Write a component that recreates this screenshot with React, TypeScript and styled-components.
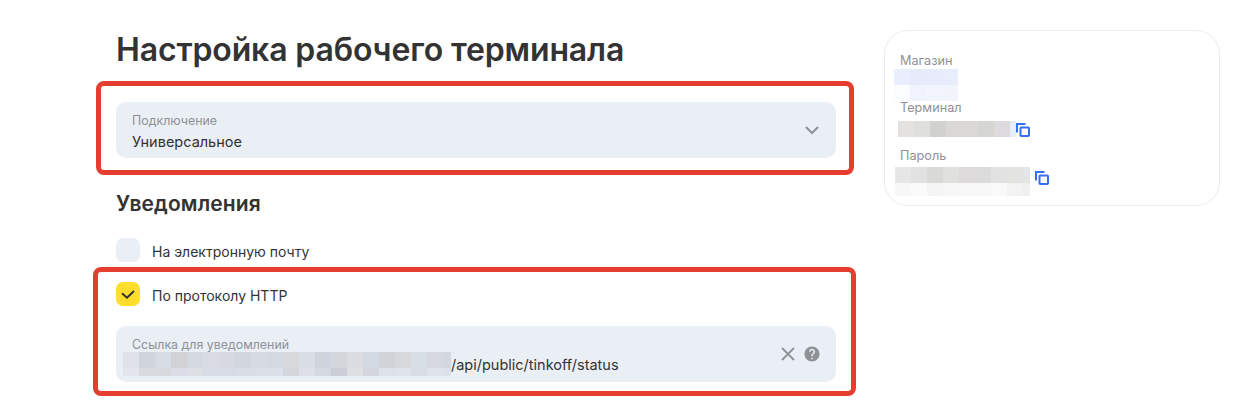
import React from "react";
import styled, { createGlobalStyle } from "styled-components";
import { MdHelp } from "react-icons/md";

const GlobalStyle = createGlobalStyle`
  html, body {
    margin: 0;
    padding: 0;
    background: #fff;
    font-family: "Inter", "Liberation Sans", sans-serif;
    color: #333;
  }
`;

const Page = styled.div`
  width: 1250px;
  height: 401px;
  overflow: hidden;
  display: flex;
  align-items: flex-start;
  padding-left: 116px;
  box-sizing: border-box;
`;

const Main = styled.div`
  width: 720px;
  display: flex;
  flex-direction: column;
`;

const Title = styled.h1`
  margin: 30px 0 0;
  height: 40px;
  font-size: 32px;
  line-height: 40px;
  font-weight: 600;
  letter-spacing: -0.14px;
  color: #333;
  white-space: nowrap;
`;

const Highlight = styled.div<{ $left: number; $right: number; $top: number; $bottom: number; $mt: number }>`
  margin-top: ${(p) => p.$mt}px;
  margin-left: ${(p) => -p.$left - 5}px;
  margin-right: ${(p) => -p.$right - 5}px;
  padding: ${(p) => `${p.$top}px ${p.$right}px ${p.$bottom}px ${p.$left}px`};
  border: 5px solid #e53d30;
  border-radius: 8px;
`;

const Field = styled.div`
  height: 56px;
  box-sizing: border-box;
  background: #eaeff6;
  border-radius: 10px;
  padding: 0 16px;
  display: flex;
  align-items: center;
  justify-content: space-between;
`;

const FieldBody = styled.div`
  display: flex;
  flex-direction: column;
  min-width: 0;
`;

const FieldLabel = styled.div`
  font-size: 12.4px;
  line-height: 16px;
  color: #8e9196;
`;

const FieldValue = styled.div`
  font-size: 14.5px;
  line-height: 20px;
  margin-top: 3px;
  margin-bottom: -4px;
  color: #333;
`;

const UrlLabel = styled(FieldLabel)`
  margin-top: 4px;
  line-height: 18px;
  margin-bottom: -2px;
`;

const UrlValue = styled.div`
  display: flex;
  align-items: flex-start;
  margin-left: -9px;
  height: 24px;
  font-size: 14.5px;
  line-height: 24px;
  color: #333;
`;

const UrlText = styled.span`
  margin-top: 1px;
`;

const FieldActions = styled.div`
  display: flex;
  align-items: center;
  gap: 7px;
  margin-right: -1px;
  color: #8e9196;
`;

const SectionTitle = styled.h2`
  margin: 17px 0 0;
  height: 24px;
  font-size: 21px;
  line-height: 24px;
  font-weight: 600;
  letter-spacing: 0.1px;
  color: #333;
`;

const CheckRow = styled.div<{ $mt: number }>`
  display: flex;
  align-items: center;
  gap: 12px;
  margin-top: ${(p) => p.$mt}px;
`;

const CheckBox = styled.div<{ $checked?: boolean }>`
  width: 24px;
  height: 24px;
  border-radius: 7px;
  background: ${(p) => (p.$checked ? "#ffdd2d" : "#eaeff6")};
  display: flex;
  align-items: center;
  justify-content: center;
`;

const CheckText = styled.span`
  font-size: 14px;
  line-height: 24px;
  padding-top: 2px;
  margin-bottom: -2px;
  color: #333;
`;

const FieldGap = styled.div`
  height: 20px;
`;

const Side = styled.aside`
  margin: 30px 0 0 48px;
  width: 336px;
  height: 176px;
  box-sizing: border-box;
  border: 1px solid #ececec;
  border-radius: 24px;
  padding: 22px 0 0 9px;
  display: flex;
  flex-direction: column;
`;

const SideLabel = styled.div<{ $after: number; $before?: number }>`
  padding-left: 6px;
  font-size: 12.7px;
  line-height: 16px;
  color: #8e9196;
  margin-top: ${(p) => p.$before ?? 0}px;
  margin-bottom: ${(p) => p.$after}px;
`;

const SideRow = styled.div<{ $indent: number; $gap: number }>`
  display: flex;
  align-items: flex-start;
  margin-left: ${(p) => p.$indent}px;
  gap: ${(p) => p.$gap}px;
`;

const CopyButton = styled.span<{ $mt: number }>`
  display: flex;
  color: #336fee;
  margin-top: ${(p) => p.$mt}px;
`;

const Blur = styled.div`
  display: flex;
  flex-direction: column;
  flex: none;
`;

const BlurRow = styled.div<{ $h: number }>`
  display: flex;
  height: ${(p) => p.$h}px;
`;

const BlurCell = styled.div<{ $w: number; $c: string }>`
  width: ${(p) => p.$w}px;
  background: ${(p) => p.$c};
`;

type MosaicRow = { h: number; cells: string[] };

const Mosaic = ({ rows, last = 16 }: { rows: MosaicRow[]; last?: number }) => (
  <Blur>
    {rows.map((row, r) => (
      <BlurRow key={r} $h={row.h}>
        {row.cells.map((c, i) => (
          <BlurCell key={i} $c={c} $w={i === row.cells.length - 1 ? last : 16} />
        ))}
      </BlurRow>
    ))}
  </Blur>
);

const shopRows: MosaicRow[] = [
  { h: 16, cells: ["#e9edfc", "#e6eafa", "#e7ebfb", "#e8ecfb"] },
  { h: 16, cells: ["#fbfcfe", "#f0f3fd", "#f3f5fd", "#f1f4fd"] },
];

const terminalRows: MosaicRow[] = [
  { h: 16, cells: ["#e3e2e1", "#dfdfde", "#d1d1ce", "#d9d8d7", "#d9d8d7", "#d5d5d2", "#dcdadc", "#e8edfa"] },
];

const passwordRows: MosaicRow[] = [
  { h: 16, cells: ["#e6e6e6", "#e1e1e1", "#d9d9d8", "#e0e0df", "#dcdadb", "#dcdbdb", "#e1e2e1", "#e3e3e2", "#e2e6e7"] },
  { h: 13, cells: ["#f7f7f7", "#fafafa", "#f5f5f5", "#f6f6f6", "#f8f8f8", "#f8f8f8", "#f9f9f9", "#f3f3f3", "#efefef"] },
];

const urlRows: MosaicRow[] = [
  {
    h: 16,
    cells: [
      "#dfe2e8", "#d0d4dc", "#d6dbe4", "#d2d2d6", "#d4d8e0", "#d8dce2", "#d6d9df", "#d2d6df", "#d6dae3", "#d4d8e1", "#d6d8dc",
      "#d9dde5", "#cfd3dc", "#d3d6db", "#d9dce0", "#d3d9e2", "#d0d3d8", "#d6d8dc", "#d7dee6", "#d6d9e1", "#d3d7e0",
    ],
  },
  {
    h: 8,
    cells: [
      "#e2e6ec", "#d7dbe0", "#d6d9de", "#dadde5", "#dce0e4", "#d8dce6", "#d7dbe5", "#d9dde6", "#dadee7", "#dbdfe7", "#d3d6da",
      "#dde0e8", "#d4d8e1", "#cbced7", "#dce0e3", "#d3d6df", "#dde1ea", "#dfe3ea", "#d9dde6", "#dfe3ea", "#dde1e9",
    ],
  },
];

const Chevron = () => (
  <svg width="16" height="10" viewBox="0 0 16 10" fill="none">
    <path d="M2 2l6 6 6-6" stroke="#8e9196" strokeWidth="2" />
  </svg>
);

const Cross = () => (
  <svg width="16" height="16" viewBox="0 0 16 16" fill="none">
    <path d="M2 2l12 12M14 2L2 14" stroke="#8e9196" strokeWidth="1.8" />
  </svg>
);

const Tick = () => (
  <svg width="14" height="10" viewBox="0 0 14 10" fill="none">
    <path d="M1 4.3l5 4.4L13 2" stroke="#333" strokeWidth="2" />
  </svg>
);

const CopyIcon = () => (
  <svg width="14" height="14" viewBox="0 0 14 14" fill="none" stroke="currentColor" strokeWidth="2">
    <path d="M1 9.5V1h8.5" />
    <rect x="4.5" y="4.5" width="8.5" height="8.5" rx="0.8" />
  </svg>
);

const App = () => {
  return (
    <>
      <GlobalStyle />
      <Page>
        <Main>
          <Title>Настройка рабочего терминала</Title>
          <Highlight $mt={11} $left={15} $right={13} $top={16} $bottom={12}>
            <Field>
              <FieldBody>
                <FieldLabel>Подключение</FieldLabel>
                <FieldValue>Универсальное</FieldValue>
              </FieldBody>
              <Chevron />
            </Field>
          </Highlight>
          <SectionTitle>Уведомления</SectionTitle>
          <CheckRow $mt={22}>
            <CheckBox />
            <CheckText>На электронную почту</CheckText>
          </CheckRow>
          <Highlight $mt={5} $left={18} $right={15} $top={10} $bottom={9}>
            <CheckRow $mt={0}>
              <CheckBox $checked>
                <Tick />
              </CheckBox>
              <CheckText>По протоколу HTTP</CheckText>
            </CheckRow>
            <FieldGap />
            <Field>
              <FieldBody>
                <UrlLabel>Ссылка для уведомлений</UrlLabel>
                <UrlValue>
                  <Mosaic rows={urlRows} last={8} />
                  <UrlText>/api/public/tinkoff/status</UrlText>
                </UrlValue>
              </FieldBody>
              <FieldActions>
                <Cross />
                <MdHelp size={18} />
              </FieldActions>
            </Field>
          </Highlight>
        </Main>
        <Side>
          <SideLabel $after={0}>Магазин</SideLabel>
          <SideRow $indent={0} $gap={0}>
            <Mosaic rows={shopRows} />
          </SideRow>
          <SideLabel $before={-1} $after={5}>Терминал</SideLabel>
          <SideRow $indent={4} $gap={0}>
            <Mosaic rows={terminalRows} last={6} />
            <CopyButton $mt={2}>
              <CopyIcon />
            </CopyButton>
          </SideRow>
          <SideLabel $before={11} $after={3}>Пароль</SideLabel>
          <SideRow $indent={1} $gap={5}>
            <Mosaic rows={passwordRows} last={7} />
            <CopyButton $mt={4}>
              <CopyIcon />
            </CopyButton>
          </SideRow>
        </Side>
      </Page>
    </>
  );
};

export default App;
